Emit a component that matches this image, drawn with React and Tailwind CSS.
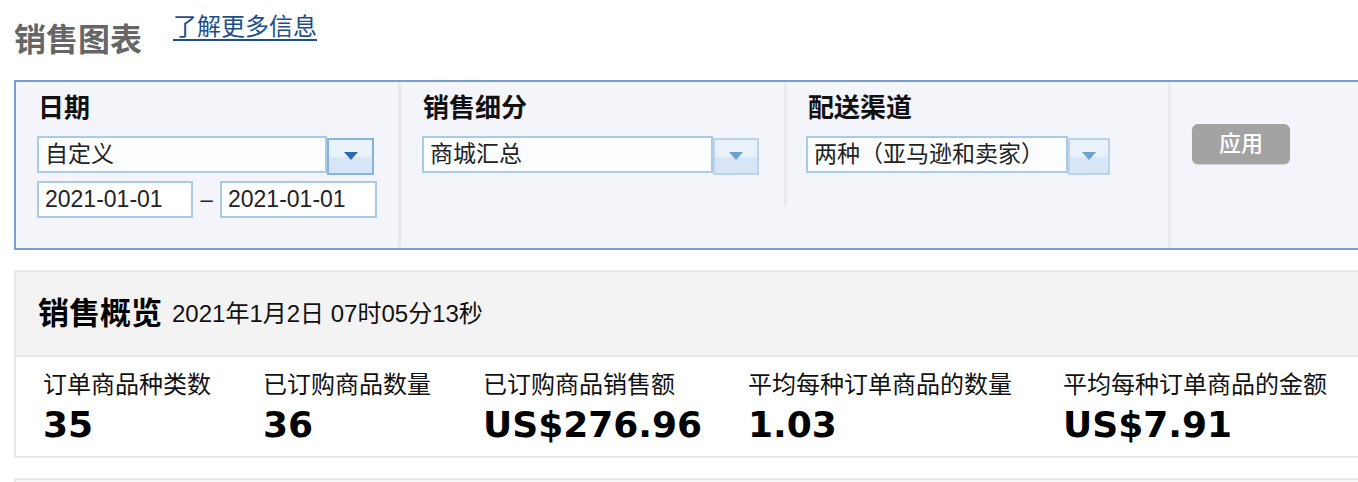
import React from 'react';

const SelectBox = ({ value, width, btnWidth, focused }) => (
  <div className="flex items-start">
    <div
      className={`h-[37px] border-2 border-[#abcae7] bg-[#fbfdff] pl-[6px] flex items-center text-[23px] leading-none text-[#222] ${width}`}
    >
      {value}
    </div>
    <div
      className={`mt-[2px] h-[37px] border-2 ${
        focused ? 'border-[#87b1df]' : 'border-[#bcd4ea]'
      } ${btnWidth} flex items-center justify-center bg-[linear-gradient(to_bottom,#e9f1fb_50%,#d7e6f6_50%)]`}
    >
      <svg width="14" height="8" viewBox="0 0 14 8" className="-mt-[1px]">
        <polygon points="0,0 14,0 7,8" fill={focused ? '#2d6cb4' : '#6d9fd0'} />
      </svg>
    </div>
  </div>
);

const Metric = ({ label, value, width }) => (
  <div className={`flex flex-col shrink-0 ${width}`}>
    <div className="text-[24px] leading-none text-[#111] whitespace-nowrap">{label}</div>
    <div className="mt-[10px] font-['DejaVu_Sans',sans-serif] text-[36px] font-bold leading-none text-black whitespace-nowrap">
      {value}
    </div>
  </div>
);

export default function App() {
  // column widths read off the screenshot
  const metrics = [
    { label: '订单商品种类数', value: '35', width: 'w-[220px]' },
    { label: '已订购商品数量', value: '36', width: 'w-[220px]' },
    { label: '已订购商品销售额', value: 'US$276.96', width: 'w-[265px]' },
    { label: '平均每种订单商品的数量', value: '1.03', width: 'w-[315px]' },
    { label: '平均每种订单商品的金额', value: 'US$7.91', width: 'w-auto' },
  ];

  return (
    <div className="w-[1358px] h-[482px] overflow-hidden bg-white font-['Liberation_Sans','Noto_Sans_CJK_SC',sans-serif]">
      {/* page header */}
      <div className="h-[80px] flex items-start pl-[14px]">
        <h1 className="mt-[24px] text-[32px] leading-none font-bold text-[#666]">销售图表</h1>
        <a
          href="#"
          className="ml-[31px] mt-[15px] text-[24px] leading-none text-[#1d4f8c] underline decoration-2 underline-offset-[4px]"
        >
          了解更多信息
        </a>
      </div>

      {/* filters */}
      <div className="ml-[14px] w-[1360px] h-[170px] border-2 border-[#779fd3] bg-[#f4f5fa] flex">
        <div className="w-[385px] border-r-[3px] border-[#e9e9ed] pl-[21px] pt-[13px]">
          <div className="text-[26px] leading-none font-bold text-[#111] pl-[1px]">日期</div>
          <div className="mt-[15px]">
            <SelectBox value="自定义" width="w-[290px]" btnWidth="w-[47px]" focused />
          </div>
          <div className="mt-[6px] flex items-center">
            <div className="w-[156px] h-[37px] border-2 border-[#abcae7] bg-white pl-[6px] flex items-center text-[23px] leading-none text-[#222]">
              2021-01-01
            </div>
            <div className="w-[27px] text-center text-[22px] text-[#222]">–</div>
            <div className="w-[157px] h-[37px] border-2 border-[#abcae7] bg-white pl-[6px] flex items-center text-[23px] leading-none text-[#222]">
              2021-01-01
            </div>
          </div>
        </div>

        <div className="w-[386px] flex">
          <div className="flex-1 pl-[21px] pt-[13px]">
            <div className="text-[26px] leading-none font-bold text-[#111] pl-[1px]">销售细分</div>
            <div className="mt-[15px]">
              <SelectBox value="商城汇总" width="w-[291px]" btnWidth="w-[46px]" />
            </div>
          </div>
          <div className="w-[3px] h-[124px] bg-[#e9e9ed]" />
        </div>

        <div className="w-[384px] border-r-[3px] border-[#e9e9ed] pl-[19px] pt-[13px]">
          <div className="text-[26px] leading-none font-bold text-[#111] pl-[2px]">配送渠道</div>
          <div className="mt-[15px]">
            <SelectBox value="两种（亚马逊和卖家）" width="w-[262px]" btnWidth="w-[42px]" />
          </div>
        </div>

        <div className="flex-1 pl-[21px] pt-[42px]">
          <button className="w-[98px] h-[40px] rounded-[6px] bg-[#a3a3a3] text-white text-[22px] leading-none font-medium shadow-[0_1px_1px_rgba(0,0,0,0.15)]">
            应用
          </button>
        </div>
      </div>

      {/* overview */}
      <div className="ml-[14px] mt-[20px] w-[1350px] border-2 border-[#e7e7e7]">
        <div className="h-[85px] bg-[#f3f3f3] border-b-2 border-[#e7e7e7] flex items-center pl-[22px]">
          <span className="text-[31px] leading-none font-bold text-black">销售概览</span>
          <span className="ml-[10px] text-[24px] leading-none text-[#111]">2021年1月2日 07时05分13秒</span>
        </div>
        <div className="h-[99px] bg-white flex pl-[27px] pt-[16px]">
          {metrics.map((m) => (
            <Metric key={m.label} label={m.label} value={m.value} width={m.width} />
          ))}
        </div>
      </div>

      <div className="ml-[14px] mt-[20px] w-[1350px] h-[40px] border-2 border-[#e7e7e7] bg-[#f7f7f7]" />
    </div>
  );
}
